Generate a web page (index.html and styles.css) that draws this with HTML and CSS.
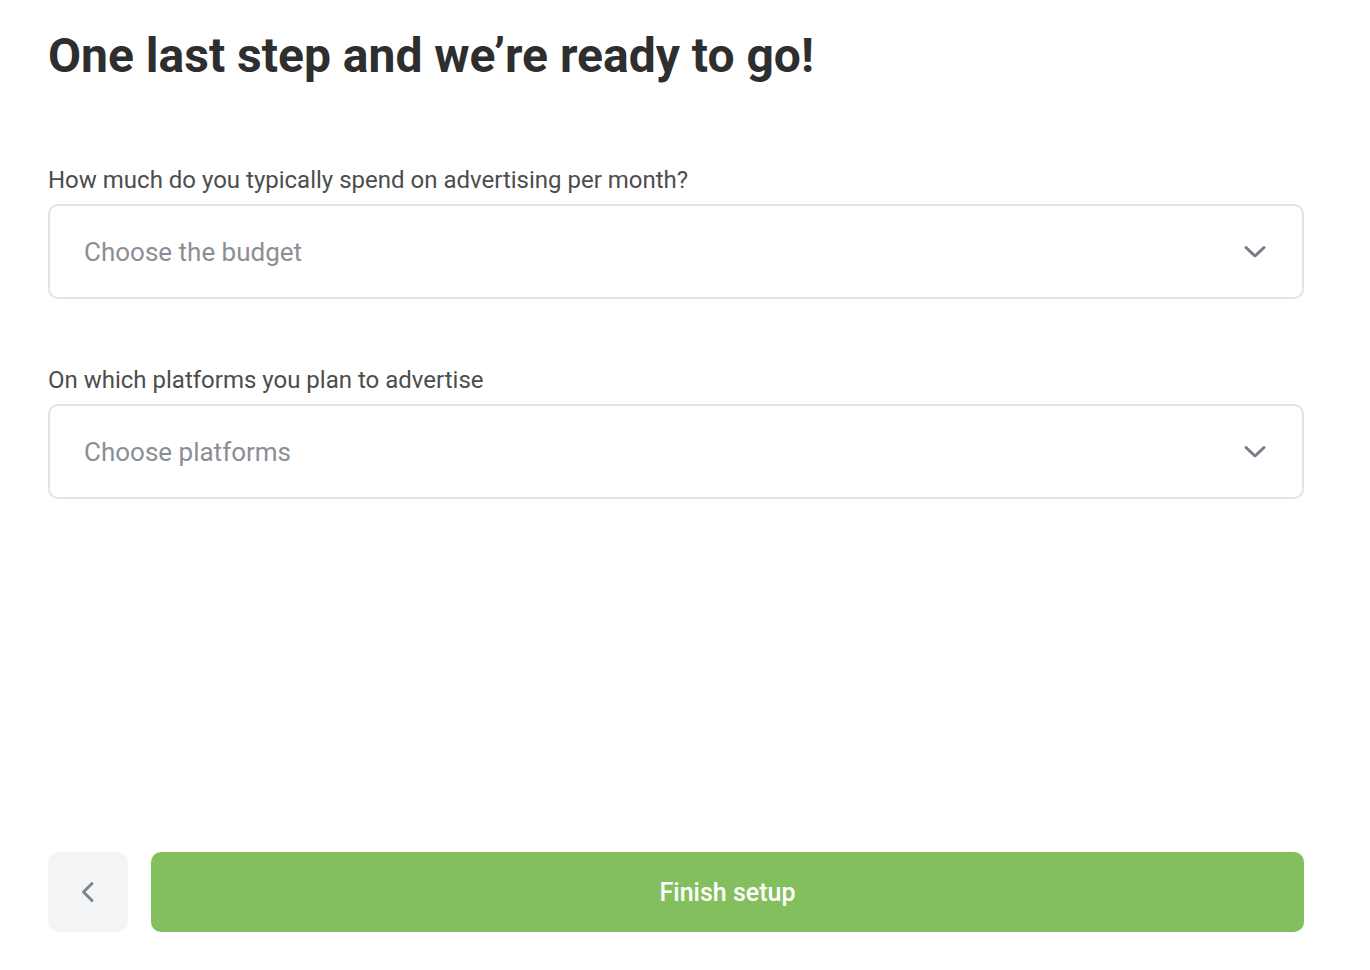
FILE: index.html
```html
<!DOCTYPE html>
<html lang="en">
<head>
<meta charset="utf-8">
<title>Finish setup</title>
<link rel="stylesheet" href="styles.css">
</head>
<body>
<main class="page">
  <h1 class="title">One last step and we’re ready to go!</h1>
  <div class="fields">
    <div class="field">
      <label class="label">How much do you typically spend on advertising per month?</label>
      <div class="select">
        <span class="placeholder">Choose the budget</span>
        <svg class="chevron" width="24" height="24" viewBox="0 0 24 24" fill="none"><path d="M3 7.5l9 8.5 9-8.5" stroke="currentColor" stroke-width="3" stroke-linecap="round" stroke-linejoin="round"/></svg>
      </div>
    </div>
    <div class="field">
      <label class="label">On which platforms you plan to advertise</label>
      <div class="select">
        <span class="placeholder">Choose platforms</span>
        <svg class="chevron" width="24" height="24" viewBox="0 0 24 24" fill="none"><path d="M3 7.5l9 8.5 9-8.5" stroke="currentColor" stroke-width="3" stroke-linecap="round" stroke-linejoin="round"/></svg>
      </div>
    </div>
  </div>
  <div class="actions">
    <button class="back" type="button" aria-label="Back">
      <svg width="20" height="24" viewBox="0 0 20 24" fill="none"><path d="M14 3.5L5.5 12l8.5 8.5" stroke="currentColor" stroke-width="3" stroke-linecap="round" stroke-linejoin="round"/></svg>
    </button>
    <button class="finish" type="button">Finish setup</button>
  </div>
</main>
</body>
</html>
```
FILE: styles.css
```css
* { box-sizing: border-box; }
html, body { margin: 0; padding: 0; background: #fff; }
body { font-family: Roboto, "Noto Sans", Arial, sans-serif; color: #2f2f2f; }

.page {
  height: 970px;
  padding: 26px 66px 38px 48px;
  display: flex;
  flex-direction: column;
}

.title {
  margin: 0;
  font-size: 48px;
  line-height: 60px;
  font-weight: 700;
  color: #2e2e2e;
}

.fields {
  margin-top: 80px;
  display: flex;
  flex-direction: column;
  gap: 67px;
}

.field { display: flex; flex-direction: column; gap: 10px; }

.label {
  font-size: 24px;
  line-height: 28px;
  color: #4d4d4d;
}

.select {
  height: 95px;
  border: 2px solid #e3e3e3;
  border-radius: 10px;
  display: flex;
  align-items: center;
  justify-content: space-between;
  padding: 0 35px 0 34px;
}

.placeholder {
  font-size: 26px;
  color: #8b8f95;
}

.chevron { color: #767b84; }

.actions {
  margin-top: auto;
  display: flex;
  gap: 23px;
  height: 80px;
}

.back {
  width: 80px;
  height: 80px;
  border: none;
  border-radius: 10px;
  background: #f3f5f7;
  color: #80858c;
  display: flex;
  align-items: center;
  justify-content: center;
  padding: 0;
}

.finish {
  flex: 1;
  height: 80px;
  border: none;
  border-radius: 10px;
  background: #84bf5e;
  color: #fff;
  font-family: Roboto, "Noto Sans", Arial, sans-serif;
  font-size: 25px;
  font-weight: 500;
}
```
